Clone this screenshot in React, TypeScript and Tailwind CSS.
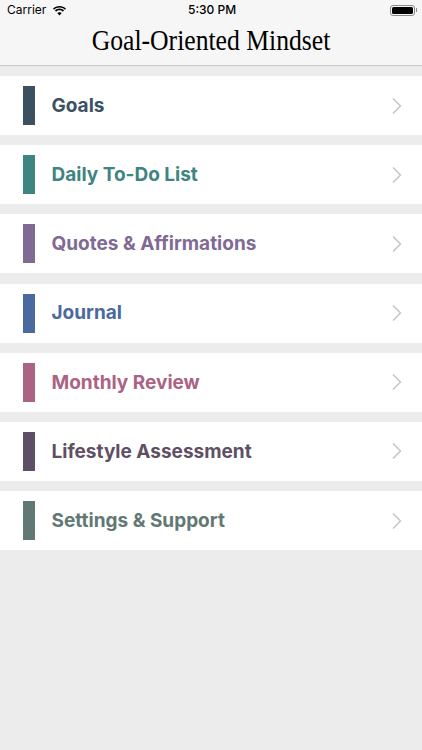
import { ChevronRight } from 'lucide-react';

const ROWS = [
  { label: 'Goals', bar: 'bg-[#3b5162]', text: 'text-[#3b5162]' },
  { label: 'Daily To-Do List', bar: 'bg-[#3e8480]', text: 'text-[#3e8480]' },
  { label: 'Quotes & Affirmations', bar: 'bg-[#7f6a94]', text: 'text-[#7f6a94]' },
  { label: 'Journal', bar: 'bg-[#4a6a9f]', text: 'text-[#4a6a9f]' },
  { label: 'Monthly Review', bar: 'bg-[#ab6384]', text: 'text-[#ab6384]' },
  { label: 'Lifestyle Assessment', bar: 'bg-[#5f4f65]', text: 'text-[#5f4f65]' },
  { label: 'Settings & Support', bar: 'bg-[#627874]', text: 'text-[#627874]' },
];

function StatusBar() {
  return (
    <div className="relative flex h-[20px] items-center justify-between pl-[7px] pr-[5px] text-black">
      <div className="flex items-center gap-[6px]">
        <span className="font-['Inter',sans-serif] text-[12px]">Carrier</span>
        <svg width="15" height="11" viewBox="0 0 15 11" fill="currentColor">
          <path d="M7.5 2.6c2.1 0 4 .8 5.4 2.2l1.1-1.2C12.3 1.9 10 .9 7.5.9S2.7 1.900 1 3.600l1.100 1.200C3.500 3.400 5.400 2.600 7.500 2.600z" />
          <path d="M7.500 5.300c1.300 0 2.500.5 3.400 1.400l1.100-1.200C10.800 4.300 9.200 3.600 7.500 3.600S4.200 4.300 3 5.500l1.100 1.200c.9-.9 2.100-1.400 3.400-1.400z" />
          <path d="M7.500 7.200c-.9 0-1.700.4-2.300.9l2.300 2.500 2.300-2.500c-.6-.5-1.400-.9-2.300-.9z" />
        </svg>
      </div>
      <span className="absolute left-[188px] font-['Inter',sans-serif] text-[12px] font-medium">5:30 PM</span>
      <div className="flex items-center gap-[1px]">
        <div className="flex h-[11px] w-[25px] items-center rounded-[3px] border border-[#8a8a8a] p-[1px]">
          <div className="h-full w-full rounded-[1.5px] bg-black" />
        </div>
        <div className="h-[4px] w-[1px] bg-[#8a8a8a]" />
      </div>
    </div>
  );
}

export default function App() {
  return (
    <div className="min-h-[750px] bg-[#ececec]">
      <div className="h-[66px] border-b border-[#c9c9c9] bg-[#f6f6f6]">
        <StatusBar />
        <div className="scale-x-[0.855] pt-[1px] text-center font-['Liberation_Serif',serif] text-[30px] leading-[38px] text-black">
          Goal-Oriented Mindset
        </div>
      </div>
      <div className="mt-[10px] flex flex-col gap-[10.2px]">
        {ROWS.map((row) => (
          <div key={row.label} className="flex h-[59px] items-center bg-white pl-[23px] pr-[11px]">
            <div className={`h-[39px] w-[12px] ${row.bar}`} />
            <span className={`ml-[16.5px] flex-1 pt-[1px] font-['Inter',sans-serif] text-[19px] font-bold ${row.text}`}>
              {row.label}
            </span>
            <ChevronRight size={28} strokeWidth={1.5} className="text-[#c7c7cc]" />
          </div>
        ))}
      </div>
    </div>
  );
}
